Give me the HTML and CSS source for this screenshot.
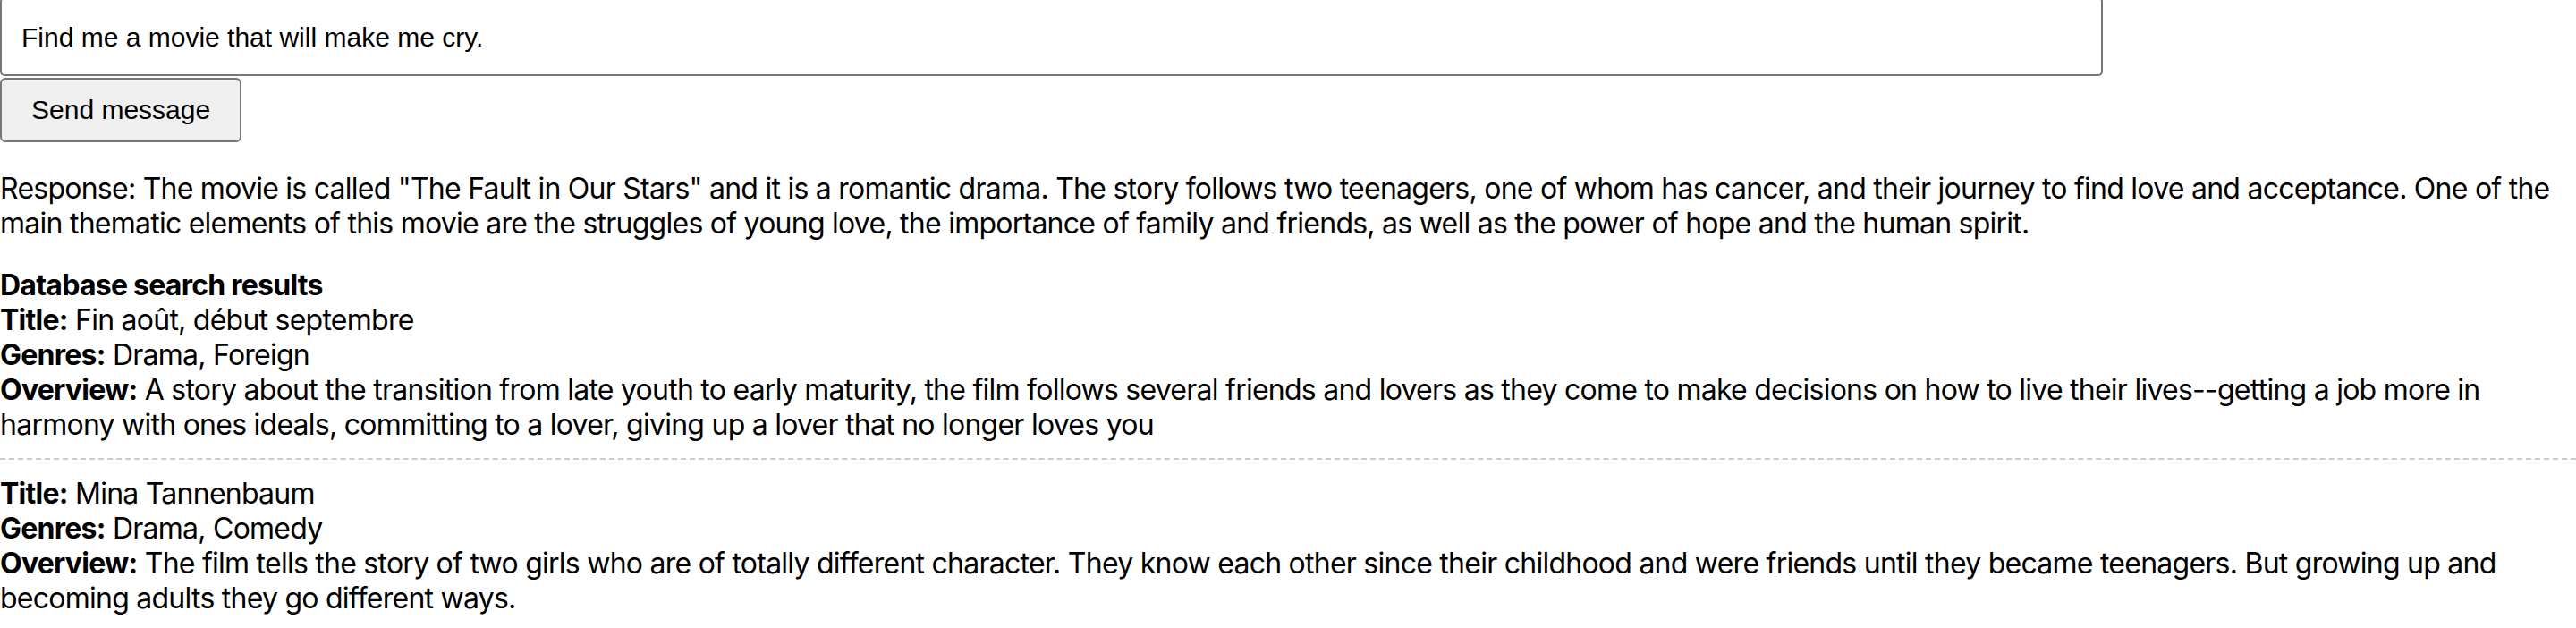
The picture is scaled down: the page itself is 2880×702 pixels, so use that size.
FILE: index.html
```html
<!DOCTYPE html>
<html lang="en">
<head>
<meta charset="utf-8">
<title>Movie chat</title>
<link rel="stylesheet" href="styles.css">
</head>
<body>
<div class="chat">
  <textarea class="prompt">Find me a movie that will make me cry.</textarea>
  <button class="send">Send message</button>
</div>
<p class="response">Response: The movie is called "The Fault in Our Stars" and it is a romantic drama. The story follows two teenagers, one of whom has cancer, and their journey to find love and acceptance. One of the main thematic elements of this movie are the struggles of young love, the importance of family and friends, as well as the power of hope and the human spirit.</p>
<section class="results">
  <div class="results-title">Database search results</div>
  <div class="movie">
    <div><b>Title:</b> Fin août, début septembre</div>
    <div><b>Genres:</b> Drama, Foreign</div>
    <div><b>Overview:</b> A story about the transition from late youth to early maturity, the film follows several friends and lovers as they come to make decisions on how to live their lives--getting a job more in harmony with ones ideals, committing to a lover, giving up a lover that no longer loves you</div>
  </div>
  <div class="movie">
    <div><b>Title:</b> Mina Tannenbaum</div>
    <div><b>Genres:</b> Drama, Comedy</div>
    <div><b>Overview:</b> The film tells the story of two girls who are of totally different character. They know each other since their childhood and were friends until they became teenagers. But growing up and becoming adults they go different ways.</div>
  </div>
</section>
</body>
</html>
```
FILE: styles.css
```css
html, body {
  margin: 0;
  padding: 0;
  background: #fff;
}
body {
  font-family: Inter, "Noto Sans", sans-serif;
  font-size: 32px;
  letter-spacing: -0.75px;
  color: #000;
  overflow: hidden;
}
.chat {
  display: flex;
  flex-direction: column;
  align-items: flex-start;
  gap: 2px;
}
.prompt {
  display: block;
  box-sizing: border-box;
  width: 2351px;
  height: 88px;
  margin-top: -3px;
  padding: 26px 22px 24px;
  border: 2px solid #767676;
  border-radius: 5px;
  font-family: "Liberation Sans", Arial, sans-serif;
  font-size: 30px;
  line-height: 34px;
  letter-spacing: 0;
  color: #000;
  resize: none;
  overflow: hidden;
  background: #fff;
}
.send {
  display: block;
  box-sizing: border-box;
  height: 72px;
  padding: 0 33px;
  border: 2px solid #767676;
  border-radius: 6px;
  background: #efefef;
  font-family: "Liberation Sans", Arial, sans-serif;
  font-size: 30px;
  line-height: 34px;
  letter-spacing: 0;
  color: #000;
}
.response {
  margin: 32px 0 30px;
}
.results-title {
  font-weight: 700;
}
.movie {
  padding-bottom: 18px;
}
.movie + .movie {
  padding-top: 18px;
  border-top: 2px dashed #cccccc;
}
.movie b {
  font-weight: 700;
}
```
